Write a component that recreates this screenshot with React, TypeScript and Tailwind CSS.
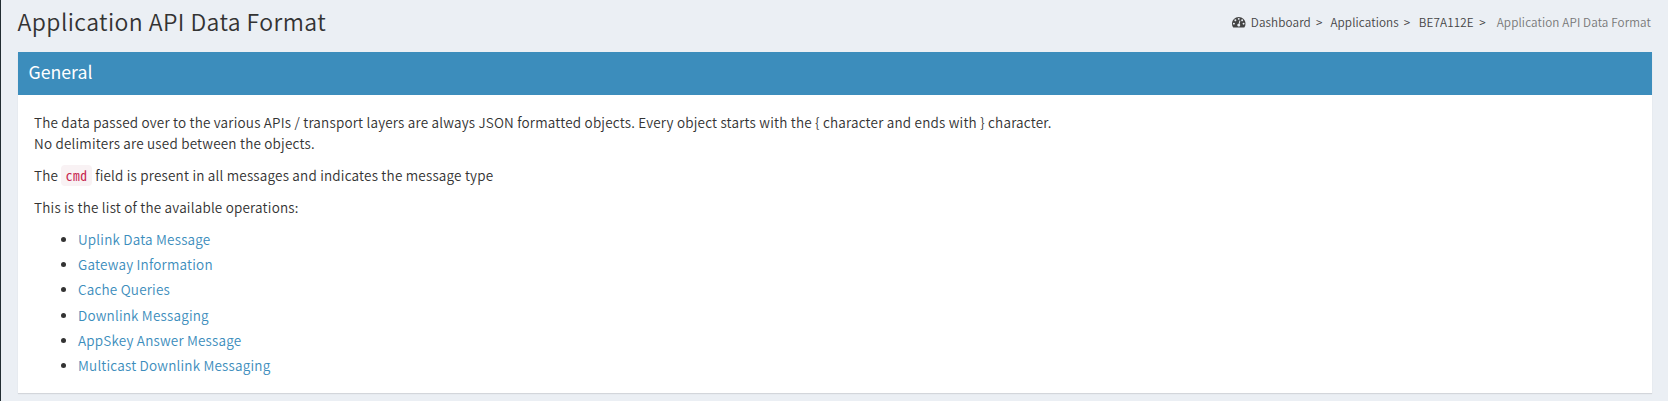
import React from "react";

const operations = [
  { label: "Uplink Data Message", row: "h-[25px]" },
  { label: "Gateway Information", row: "h-[25px]" },
  { label: "Cache Queries", row: "h-[26px]" },
  { label: "Downlink Messaging", row: "h-[25px]" },
  { label: "AppSkey Answer Message", row: "h-[25px]" },
  { label: "Multicast Downlink Messaging", row: "h-[25px]" },
];

function TachometerIcon() {
  return (
    <svg viewBox="0 0 1792 1792" className="mr-[5px] h-[13.5px] w-[13.5px] shrink-0" fill="currentColor" aria-hidden="true">
      <path d="M384 1152q0-53-37.5-90.5t-90.5-37.5-90.5 37.5-37.5 90.5 37.5 90.5 90.5 37.5 90.5-37.5 37.5-90.5zm192-448q0-53-37.5-90.5t-90.5-37.5-90.5 37.5-37.5 90.5 37.5 90.5 90.5 37.5 90.5-37.5 37.5-90.5zm428 481l101-382q6-26-7.5-48.5t-38.5-29.5-48 6.5-30 39.5l-101 382q-60 5-107 43.5t-63 98.5q-20 77 20 146t117 89 146-20 89-117q16-60-6-117t-72-91zm660-33q0-53-37.5-90.5t-90.5-37.5-90.5 37.5-37.5 90.5 37.5 90.5 90.5 37.5 90.5-37.5 37.5-90.5zm-640-640q0-53-37.5-90.5t-90.5-37.5-90.5 37.5-37.5 90.5 37.5 90.5 90.5 37.5 90.5-37.5 37.5-90.5zm448 192q0-53-37.5-90.5t-90.5-37.5-90.5 37.5-37.5 90.5 37.5 90.5 90.5 37.5 90.5-37.5 37.5-90.5zm320 448q0 261-141 483-19 29-54 29h-1402q-35 0-54-29-141-221-141-483 0-182 71-348t191-286 286-191 348-71 348 71 286 191 191 286 71 348z" />
    </svg>
  );
}

export default function App() {
  return (
    <div className="h-[401px] w-full overflow-hidden border-l border-[#222d32] bg-[#ebeff4] font-['Noto_Sans_CJK_SC',sans-serif] text-[13.5px] font-[350] leading-[21px] tracking-[0.2px] text-[#333]">
      <header className="flex h-[52px] justify-between pl-[16.5px] pr-[17px]">
        <h1 className="pt-[6px] text-[23px] font-[350] leading-[30px] tracking-[0.42px] whitespace-nowrap">Application API Data Format</h1>
        <nav className="mt-[12px] flex h-[20px] items-center text-[11.7px] leading-[20px] tracking-[0.12px] whitespace-nowrap text-[#444]">
          <TachometerIcon />
          <a>Dashboard</a>
          <span className="w-[19.5px] pl-[5px]">&gt;</span>
          <a>Applications</a>
          <span className="w-[20px] pl-[5px]">&gt;</span>
          <a>BE7A112E</a>
          <span className="w-[23px] pl-[5.5px]">&gt;</span>
          <span className="text-[#777]">Application API Data Format</span>
        </nav>
      </header>
      <section className="ml-[17px] mr-[16px] h-[341px] bg-white shadow-[0_1px_1px_rgba(0,0,0,0.1)]">
        <h2 className="h-[43px] bg-[#3c8dbc] pl-[10.5px] pt-[8px] text-[17.7px] font-normal leading-[22px] tracking-normal text-white">General</h2>
        <div className="pl-[16px] pt-[17px]">
          <p className="mb-[11px]">
            The data passed over to the various APIs / transport layers are always JSON formatted objects. Every object starts with the {"{"} character and ends with {"}"} character.
            <br />
            No delimiters are used between the objects.
          </p>
          <p className="mb-[11px] flex h-[21px]">
            <span>The</span>
            <code className="mx-[3px] h-[21px] w-[31px] rounded-[4px] bg-[#f9f2f4] pl-[4.5px] font-['Noto_Sans_Mono_CJK_SC','Liberation_Mono',monospace] text-[13.5px] font-normal leading-[21px] tracking-[0.55px] text-[#c7254e]">cmd</code>
            <span>field is present in all messages and indicates the message type</span>
          </p>
          <p className="mb-[11px]">This is the list of the available operations:</p>
          <ul>
            {operations.map(({ label, row }) => (
              <li key={label} className="flex">
                <span className="ml-[27px] mr-[12px] mt-[8px] h-[5px] w-[5px] rounded-full bg-[#333]" />
                <a className={`${row} whitespace-nowrap text-[#3c8dbc]`}>{label}</a>
              </li>
            ))}
          </ul>
        </div>
      </section>
    </div>
  );
}
